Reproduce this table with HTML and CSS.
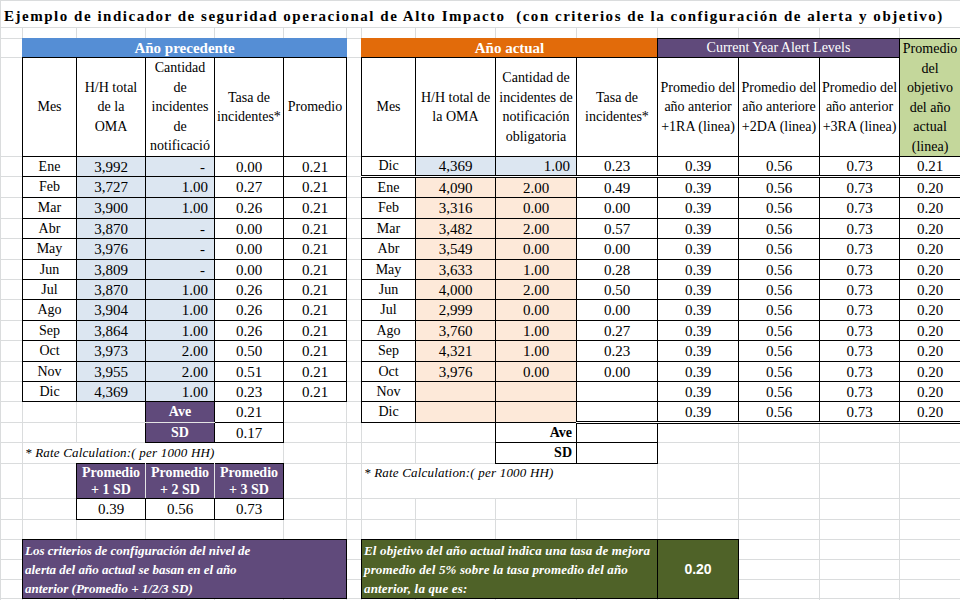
FILE: index.html
```html
<!DOCTYPE html>
<html lang="es">
<head>
<meta charset="utf-8">
<title>Indicador de seguridad operacional</title>
<link rel="stylesheet" href="styles.css">
</head>
<body>
<table class="sheet">
  <colgroup>
    <col class="c22"><col class="c54"><col class="c69"><col class="c69"><col class="c69"><col class="c63"><col class="c15">
    <col class="c54"><col class="c80"><col class="c81"><col class="c81"><col class="c81"><col class="c81"><col class="c80"><col class="c61">
  </colgroup>
  <tr class="h27"><td colspan="15" class="title">Ejemplo de indicador de seguridad operacional de Alto Impacto &nbsp;(con criterios de la configuración de alerta y objetivo)</td></tr>
  <tr class="h11"><td></td><td></td><td></td><td></td><td></td><td></td><td></td><td></td><td></td><td></td><td></td><td></td><td></td><td></td><td></td></tr>
  <tr class="h19">
    <td></td>
    <td colspan="5" class="sec sec-blue">Año precedente</td>
    <td></td>
    <td colspan="4" class="sec sec-orange">Año actual</td>
    <td colspan="3" class="sec sec-purple">Current Year Alert Levels</td>
    <td rowspan="2" class="b hd sec-green">Promedio<br>del<br>objetivo<br>del año<br>actual<br>(linea)</td>
  </tr>
  <tr class="h98">
    <td></td>
    <td class="b hd">Mes</td>
    <td class="b hd">H/H total<br>de la<br>OMA</td>
    <td class="b hd">Cantidad<br>de<br>incidentes<br>de<br>notificació</td>
    <td class="b hd">Tasa de<br>incidentes*</td>
    <td class="b hd">Promedio</td>
    <td></td>
    <td class="b hd">Mes</td>
    <td class="b hd">H/H total de<br>la OMA</td>
    <td class="b hd">Cantidad de<br>incidentes de<br>notificación<br>obligatoria</td>
    <td class="b hd">Tasa de<br>incidentes*</td>
    <td class="b hd">Promedio del<br>año anterior<br>+1RA (linea)</td>
    <td class="b hd">Promedio del<br>año anteriore<br>+2DA (linea)</td>
    <td class="b hd">Promedio del<br>año anterior<br>+3RA (linea)</td>
  </tr>
  <tr class="h20">
    <td></td><td class="b m">Ene</td><td class="b lb">3,992</td><td class="b lb r dash">-</td><td class="b">0.00</td><td class="b">0.21</td><td></td>
    <td class="b m dbl">Dic</td><td class="b lb dbl">4,369</td><td class="b lb r dbl">1.00</td><td class="b dbl">0.23</td><td class="b dbl">0.39</td><td class="b dbl">0.56</td><td class="b dbl">0.73</td><td class="b dbl">0.21</td>
  </tr>
  <tr class="h21">
    <td></td><td class="b m">Feb</td><td class="b lb">3,727</td><td class="b lb r">1.00</td><td class="b">0.27</td><td class="b">0.21</td><td></td>
    <td class="b m">Ene</td><td class="b pc">4,090</td><td class="b pc">2.00</td><td class="b">0.49</td><td class="b">0.39</td><td class="b">0.56</td><td class="b">0.73</td><td class="b">0.20</td>
  </tr>
  <tr class="h21">
    <td></td><td class="b m">Mar</td><td class="b lb">3,900</td><td class="b lb r">1.00</td><td class="b">0.26</td><td class="b">0.21</td><td></td>
    <td class="b m">Feb</td><td class="b pc">3,316</td><td class="b pc">0.00</td><td class="b">0.00</td><td class="b">0.39</td><td class="b">0.56</td><td class="b">0.73</td><td class="b">0.20</td>
  </tr>
  <tr class="h20">
    <td></td><td class="b m">Abr</td><td class="b lb">3,870</td><td class="b lb r dash">-</td><td class="b">0.00</td><td class="b">0.21</td><td></td>
    <td class="b m">Mar</td><td class="b pc">3,482</td><td class="b pc">2.00</td><td class="b">0.57</td><td class="b">0.39</td><td class="b">0.56</td><td class="b">0.73</td><td class="b">0.20</td>
  </tr>
  <tr class="h21">
    <td></td><td class="b m">May</td><td class="b lb">3,976</td><td class="b lb r dash">-</td><td class="b">0.00</td><td class="b">0.21</td><td></td>
    <td class="b m">Abr</td><td class="b pc">3,549</td><td class="b pc">0.00</td><td class="b">0.00</td><td class="b">0.39</td><td class="b">0.56</td><td class="b">0.73</td><td class="b">0.20</td>
  </tr>
  <tr class="h20">
    <td></td><td class="b m">Jun</td><td class="b lb">3,809</td><td class="b lb r dash">-</td><td class="b">0.00</td><td class="b">0.21</td><td></td>
    <td class="b m">May</td><td class="b pc">3,633</td><td class="b pc">1.00</td><td class="b">0.28</td><td class="b">0.39</td><td class="b">0.56</td><td class="b">0.73</td><td class="b">0.20</td>
  </tr>
  <tr class="h20">
    <td></td><td class="b m">Jul</td><td class="b lb">3,870</td><td class="b lb r">1.00</td><td class="b">0.26</td><td class="b">0.21</td><td></td>
    <td class="b m">Jun</td><td class="b pc">4,000</td><td class="b pc">2.00</td><td class="b">0.50</td><td class="b">0.39</td><td class="b">0.56</td><td class="b">0.73</td><td class="b">0.20</td>
  </tr>
  <tr class="h21">
    <td></td><td class="b m">Ago</td><td class="b lb">3,904</td><td class="b lb r">1.00</td><td class="b">0.26</td><td class="b">0.21</td><td></td>
    <td class="b m">Jul</td><td class="b pc">2,999</td><td class="b pc">0.00</td><td class="b">0.00</td><td class="b">0.39</td><td class="b">0.56</td><td class="b">0.73</td><td class="b">0.20</td>
  </tr>
  <tr class="h20">
    <td></td><td class="b m">Sep</td><td class="b lb">3,864</td><td class="b lb r">1.00</td><td class="b">0.26</td><td class="b">0.21</td><td></td>
    <td class="b m">Ago</td><td class="b pc">3,760</td><td class="b pc">1.00</td><td class="b">0.27</td><td class="b">0.39</td><td class="b">0.56</td><td class="b">0.73</td><td class="b">0.20</td>
  </tr>
  <tr class="h21">
    <td></td><td class="b m">Oct</td><td class="b lb">3,973</td><td class="b lb r">2.00</td><td class="b">0.50</td><td class="b">0.21</td><td></td>
    <td class="b m">Sep</td><td class="b pc">4,321</td><td class="b pc">1.00</td><td class="b">0.23</td><td class="b">0.39</td><td class="b">0.56</td><td class="b">0.73</td><td class="b">0.20</td>
  </tr>
  <tr class="h20">
    <td></td><td class="b m">Nov</td><td class="b lb">3,955</td><td class="b lb r">2.00</td><td class="b">0.51</td><td class="b">0.21</td><td></td>
    <td class="b m">Oct</td><td class="b pc">3,976</td><td class="b pc">0.00</td><td class="b">0.00</td><td class="b">0.39</td><td class="b">0.56</td><td class="b">0.73</td><td class="b">0.20</td>
  </tr>
  <tr class="h20">
    <td></td><td class="b m">Dic</td><td class="b lb">4,369</td><td class="b lb r">1.00</td><td class="b">0.23</td><td class="b">0.21</td><td></td>
    <td class="b m">Nov</td><td class="b pc"></td><td class="b pc"></td><td class="b"></td><td class="b">0.39</td><td class="b">0.56</td><td class="b">0.73</td><td class="b">0.20</td>
  </tr>
  <tr class="h21">
    <td></td><td></td><td></td><td class="pu pu-top">Ave</td><td class="b">0.21</td><td></td><td></td>
    <td class="b m">Dic</td><td class="b pc"></td><td class="b pc"></td><td class="b dbl"></td><td class="b dbl">0.39</td><td class="b dbl">0.56</td><td class="b dbl">0.73</td><td class="b dbl">0.20</td>
  </tr>
  <tr class="h20">
    <td></td><td></td><td></td><td class="pu pu-bot">SD</td><td class="b">0.17</td><td></td><td></td>
    <td></td><td></td><td class="b r lbl">Ave</td><td class="b"></td><td></td><td></td><td></td><td></td>
  </tr>
  <tr class="h21">
    <td></td><td colspan="4" class="note">* Rate Calculation:( per 1000 HH)</td><td></td><td></td>
    <td></td><td></td><td class="b r lbl">SD</td><td class="b"></td><td></td><td></td><td></td><td></td>
  </tr>
  <tr class="h32">
    <td></td><td></td>
    <td class="ph ph-l">Promedio<br>+ 1 SD</td>
    <td class="ph ph-m">Promedio<br>+ 2 SD</td>
    <td class="ph ph-r">Promedio<br>+ 3 SD</td>
    <td></td><td></td>
    <td colspan="4" class="note note-top">* Rate Calculation:( per 1000 HH)</td>
    <td></td><td></td><td></td><td></td>
  </tr>
  <tr class="h21">
    <td></td><td></td><td class="b">0.39</td><td class="b">0.56</td><td class="b">0.73</td><td></td><td></td><td></td><td></td><td></td><td></td><td></td><td></td><td></td><td></td>
  </tr>
  <tr class="h20"><td></td><td></td><td></td><td></td><td></td><td></td><td></td><td></td><td></td><td></td><td></td><td></td><td></td><td></td><td></td></tr>
  <tr class="h20">
    <td></td>
    <td colspan="5" rowspan="3" class="box box-purple">Los criterios de configuración del nivel de<br>alerta del año actual se basan en el año<br>anterior (Promedio + 1/2/3 SD)</td>
    <td></td>
    <td colspan="4" rowspan="3" class="box box-green">El objetivo del año actual indica una tasa de mejora<br>promedio del 5% sobre la tasa promedio del año<br>anterior, la que es:</td>
    <td rowspan="3" class="goal">0.20</td>
    <td></td><td></td><td></td>
  </tr>
  <tr class="h20"><td></td><td></td><td></td><td></td><td></td></tr>
  <tr class="h19"><td></td><td></td><td></td><td></td><td></td></tr>
  <tr class="h10"><td></td><td></td><td></td><td></td><td></td><td></td><td></td><td></td><td></td><td></td><td></td><td></td><td></td><td></td><td></td></tr>
</table>
</body>
</html>
```

FILE: styles.css
```css
html, body {
  margin: 0;
  padding: 0;
  background: #ffffff;
  overflow: hidden;
}

.sheet {
  border-collapse: collapse;
  table-layout: fixed;
  width: 960px;
  font-family: "Liberation Serif", "Times New Roman", serif;
  font-size: 15px;
  color: #000;
}

.sheet col {
  border-left: 1px solid #dadcdd;
  border-right: 1px solid #dadcdd;
}

.c22 { width: 22px; }
.c54 { width: 54px; }
.c69 { width: 69px; }
.c63 { width: 63px; }
.c15 { width: 15px; }
.c80 { width: 80px; }
.c81 { width: 81px; }
.c61 { width: 61px; }

.sheet tr {
  border-top: 1px solid #dadcdd;
  border-bottom: 1px solid #dadcdd;
}

.h10 { height: 10px; }
.h11 { height: 11px; }
.h19 { height: 19px; }
.h20 { height: 20px; }
.h21 { height: 21px; }
.h22 { height: 22px; }
.h27 { height: 27px; }
.h32 { height: 32px; }
.h98 { height: 98px; }

.sheet td {
  padding: 0 2px;
  text-align: center;
  vertical-align: middle;
  white-space: nowrap;
  overflow: hidden;
  line-height: 16px;
}

.title {
  text-align: left !important;
  vertical-align: bottom !important;
  padding: 0 0 3px 3px !important;
  font-weight: bold;
  font-size: 15px;
  letter-spacing: 1.52px;
  overflow: visible !important;
}

.b { border: 1px solid #000; }
.m { font-size: 14px; }
.hd { font-size: 14px; line-height: 19.5px !important; }
.lb { background: #dce6f1; }
.pc { background: #fde9d9; }
.r { text-align: right !important; padding-right: 6px !important; }
.dash { padding-right: 9px !important; }
.dbl { border-bottom: 3px double #000; }
.lbl { font-weight: bold; font-size: 14px; padding-right: 4px !important; }

.sec {
  color: #fff;
  font-size: 15px;
}
.sec-blue {
  background: #558ed5;
  font-weight: bold;
  border: 1px solid #558ed5;
  border-bottom-color: #000;
}
.sec-orange {
  background: #e26b0a;
  font-weight: bold;
  border: 1px solid #e26b0a;
  border-bottom-color: #000;
  border-right-color: #000;
}
.sec-purple {
  background: #604a7b;
  font-size: 14px;
  border: 1px solid #000;
}
.sec-green {
  background: #c4d79b;
  vertical-align: top !important;
}

.pu {
  background: #604a7b;
  color: #fff;
  font-weight: bold;
  font-size: 14px;
  border: 1px solid #000;
}
.pu-top { border-bottom-color: #e4e4e4; }
.pu-bot { border-top-color: #e4e4e4; }

.ph {
  background: #604a7b;
  color: #fff;
  font-weight: bold;
  font-size: 14px;
  line-height: 17px !important;
  border: 1px solid #000;
}
.ph-l { border-right-color: #e4e4e4; }
.ph-m { border-left-color: #e4e4e4; border-right-color: #e4e4e4; }
.ph-r { border-left-color: #e4e4e4; }

.note {
  text-align: left !important;
  font-style: italic;
  font-size: 13px;
  letter-spacing: 0.2px;
  overflow: visible !important;
}
.note-top {
  vertical-align: top !important;
  padding-top: 1px !important;
}

.box {
  text-align: left !important;
  vertical-align: top !important;
  padding-top: 1px !important;
  color: #fff;
  font-weight: bold;
  font-style: italic;
  font-size: 13px;
  line-height: 19px !important;
  border: 1px solid #000;
}
.box-purple { background: #604a7b; }
.box-green { background: #4f6228; letter-spacing: 0.15px; }

.goal {
  background: #4f6228;
  color: #fff;
  border: 1px solid #000;
  font-family: "Liberation Sans", Arial, sans-serif;
  font-weight: bold;
  font-size: 14px;
}
```
